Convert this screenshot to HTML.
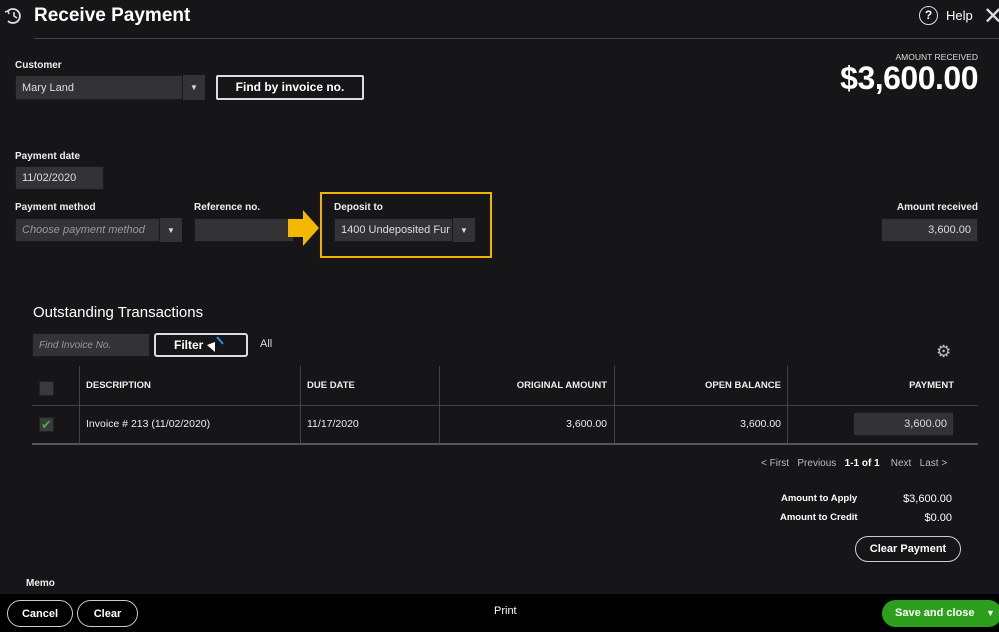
<!DOCTYPE html>
<html><head><style>
*{box-sizing:border-box;margin:0;padding:0}
body{width:999px;height:632px;background:#161618;color:#fff;font-family:"Liberation Sans",sans-serif;position:relative;overflow:hidden}
.a{position:absolute}
.lbl{font-size:10px;font-weight:bold;color:#eee}
.inp{position:absolute;background:#333336;border:1px solid #1a1a1a;font-size:11px;color:#ddd;padding-left:6px;display:flex;align-items:center}
.dd{position:absolute;background:#333336;display:flex;align-items:center;justify-content:center;font-size:8px;color:#ddd}
.th{font-size:9.5px;font-weight:bold;color:#eee}
.td{font-size:10.5px;color:#eee}
.vl{position:absolute;width:1px;background:#444}
.btn{position:absolute;border:1.5px solid #ccc;border-radius:14px;font-size:11px;font-weight:bold;display:flex;align-items:center;justify-content:center;color:#fff}
</style></head><body>
<svg class="a" style="left:4px;top:6px" width="20" height="20" viewBox="0 0 20 20"><path d="M4 5 A7 7 0 1 1 4 15" fill="none" stroke="#ddd" stroke-width="1.8"/><path d="M10 6v4l3 2" fill="none" stroke="#ddd" stroke-width="1.6"/><path d="M1 6l3-1 1 3" fill="none" stroke="#ddd" stroke-width="1.5"/></svg>
<div class="a" style="left:34px;top:5px;font-size:19px;font-weight:bold">Receive Payment</div>
<div class="a" style="left:34px;top:38px;width:965px;height:1px;background:#444"></div>
<div class="a" style="left:919px;top:6px;width:19px;height:19px;border:1.8px solid #ddd;border-radius:50%;font-size:12px;font-weight:bold;text-align:center;line-height:16px">?</div>
<div class="a" style="left:946px;top:8px;font-size:13px">Help</div>
<div class="a" style="left:983px;top:2px;font-size:24px;color:#ddd">✕</div>

<div class="a lbl" style="left:15px;top:60px">Customer</div>
<div class="inp" style="left:15px;top:75px;width:168px;height:25px">Mary Land</div>
<div class="dd" style="left:183px;top:75px;width:22px;height:25px">▼</div>
<div class="a" style="left:216px;top:75px;width:148px;height:25px;border:2px solid #ddd;border-radius:2px;font-size:12px;font-weight:bold;text-align:center;line-height:21px">Find by invoice no.</div>
<div class="a" style="right:21px;top:52px;font-size:8.5px;color:#ddd">AMOUNT RECEIVED</div>
<div class="a" style="right:21px;top:60px;font-size:32px;font-weight:bold;letter-spacing:-0.5px">$3,600.00</div>

<div class="a lbl" style="left:15px;top:151px">Payment date</div>
<div class="inp" style="left:15px;top:166px;width:89px;height:24px">11/02/2020</div>
<div class="a lbl" style="left:15px;top:202px">Payment method</div>
<div class="inp" style="left:15px;top:218px;width:145px;height:24px;font-style:italic;color:#999">Choose payment method</div>
<div class="dd" style="left:160px;top:218px;width:22px;height:24px">▼</div>
<div class="a lbl" style="left:194px;top:202px">Reference no.</div>
<div class="inp" style="left:194px;top:218px;width:100px;height:24px"></div>
<svg class="a" style="left:288px;top:210px" width="32" height="36"><path d="M0 9h15V0l16 18-16 18V27H0z" fill="#f5b800"/></svg>
<div class="a" style="left:320px;top:192px;width:172px;height:66px;border:2px solid #f0b400"></div>
<div class="a lbl" style="left:334px;top:202px">Deposit to</div>
<div class="inp" style="left:334px;top:218px;width:119px;height:24px">1400 Undeposited Fur</div>
<div class="dd" style="left:453px;top:218px;width:22px;height:24px">▼</div>
<div class="a lbl" style="right:21px;top:202px">Amount received</div>
<div class="inp" style="left:881px;top:218px;width:97px;height:24px;justify-content:flex-end;padding-right:6px">3,600.00</div>

<div class="a" style="left:33px;top:304px;font-size:15px">Outstanding Transactions</div>
<div class="inp" style="left:32px;top:333px;width:118px;height:24px;font-style:italic;color:#999;font-size:10px">Find Invoice No.</div>
<div class="a" style="left:154px;top:333px;width:94px;height:24px;border:2px solid #ddd;border-radius:3px;font-size:12px;font-weight:bold;padding-left:18px;line-height:20px">Filter</div>
<svg class="a" style="left:205px;top:335px" width="22" height="18"><path d="M2 10l8-3 0 10z" fill="#fff"/><path d="M12 2l6 7" stroke="#2b8ee0" stroke-width="2"/></svg>
<div class="a" style="left:260px;top:338px;font-size:11px;color:#ddd">All</div>
<div class="a" style="left:936px;top:342px;font-size:17px;color:#bbb">⚙</div>

<div class="vl" style="left:79px;top:366px;height:78px"></div>
<div class="vl" style="left:300px;top:366px;height:78px"></div>
<div class="vl" style="left:439px;top:366px;height:78px"></div>
<div class="vl" style="left:614px;top:366px;height:78px"></div>
<div class="vl" style="left:787px;top:366px;height:78px"></div>
<div class="a" style="left:32px;top:405px;width:946px;height:1px;background:#444"></div>
<div class="a" style="left:32px;top:443px;width:946px;height:2px;background:#555"></div>
<div class="a" style="left:39px;top:381px;width:15px;height:15px;background:#3a3a3c;border:1px solid #222"></div>
<div class="a th" style="left:86px;top:380px">DESCRIPTION</div>
<div class="a th" style="left:307px;top:380px">DUE DATE</div>
<div class="a th" style="right:392px;top:380px">ORIGINAL AMOUNT</div>
<div class="a th" style="right:218px;top:380px">OPEN BALANCE</div>
<div class="a th" style="right:45px;top:380px">PAYMENT</div>
<div class="a" style="left:39px;top:417px;width:15px;height:15px;background:#3a3a3c;border:1px solid #222;color:#3bb33b;font-size:13px;line-height:13px;text-align:center">✔</div>
<div class="a td" style="left:86px;top:418px">Invoice # 213 (11/02/2020)</div>
<div class="a td" style="left:307px;top:418px">11/17/2020</div>
<div class="a td" style="right:392px;top:418px">3,600.00</div>
<div class="a td" style="right:218px;top:418px">3,600.00</div>
<div class="inp" style="left:853px;top:412px;width:101px;height:24px;justify-content:flex-end;padding-right:6px">3,600.00</div>

<div class="a" style="left:761px;top:458px;font-size:10px;color:#bbb;white-space:nowrap">&lt; First &nbsp; Previous &nbsp; <b style="color:#fff">1-1 of 1</b> &nbsp;&nbsp; Next &nbsp; Last &gt;</div>
<div class="a" style="left:781px;top:493px;font-size:9.5px;font-weight:bold">Amount to Apply</div>
<div class="a" style="right:47px;top:493px;font-size:11px">$3,600.00</div>
<div class="a" style="left:780px;top:512px;font-size:9.5px;font-weight:bold">Amount to Credit</div>
<div class="a" style="right:47px;top:512px;font-size:11px">$0.00</div>
<div class="btn" style="left:855px;top:536px;width:106px;height:26px">Clear Payment</div>
<div class="a lbl" style="left:26px;top:578px">Memo</div>

<div class="a" style="left:0;top:594px;width:999px;height:38px;background:#000"></div>
<div class="btn" style="left:7px;top:600px;width:66px;height:27px">Cancel</div>
<div class="btn" style="left:77px;top:600px;width:61px;height:27px">Clear</div>
<div class="a" style="left:494px;top:605px;font-size:11px">Print</div>
<div class="a" style="left:882px;top:600px;width:120px;height:27px;background:#2ca01c;border-radius:14px;font-size:11px;font-weight:bold;line-height:27px;padding-left:13px">Save and close <span style="position:absolute;left:104px;font-size:9px">▼</span></div>
</body></html>
